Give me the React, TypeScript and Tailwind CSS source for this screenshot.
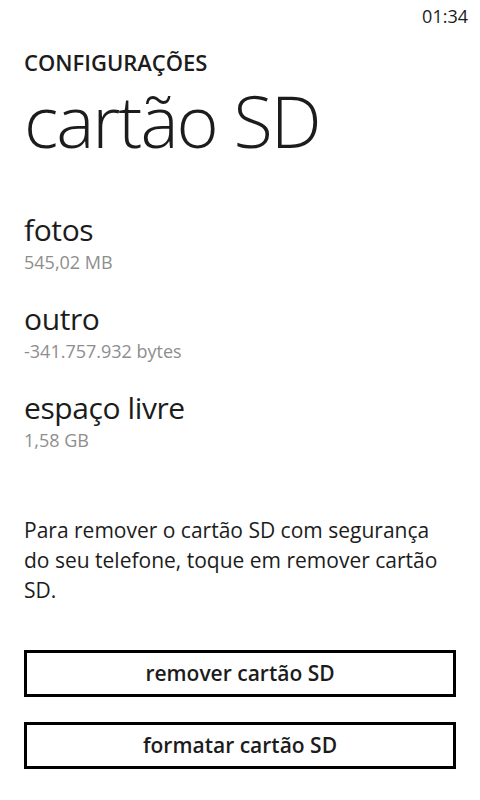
const items = [
  { title: 'fotos', detail: '545,02 MB' },
  { title: 'outro', detail: '-341.757.932 bytes' },
  { title: 'espaço livre', detail: '1,58 GB' },
];

function StorageRow({ title, detail }: { title: string; detail: string }) {
  return (
    <div className="flex flex-col">
      <span className="text-[30px] leading-[40px] font-normal tracking-[-0.4px] text-[#1c1c1c]">{title}</span>
      <span className="text-[18px] leading-[24px] text-[#8e8e8e]">{detail}</span>
    </div>
  );
}

function OutlineButton({ label }: { label: string }) {
  return (
    <button
      type="button"
      className="flex h-[47px] w-[432px] items-center justify-center border-[3px] border-black bg-white text-[21px] font-semibold text-[#1c1c1c]"
    >
      {label}
    </button>
  );
}

export default function App() {
  return (
    <div
      className="h-[800px] w-[480px] overflow-hidden bg-white text-[#1c1c1c]"
      style={{ fontFamily: '"Open Sans", "Noto Sans", sans-serif' }}
    >
      {/* status bar */}
      <div className="flex h-[32px] justify-end pr-[12px] pt-[6px]">
        <span className="text-[18px] leading-[20px]">01:34</span>
      </div>

      <div className="pl-[24px]">
        <p className="mt-[16px] text-[22px] leading-[28px] font-semibold">CONFIGURAÇÕES</p>
        <h1 className="mt-[6px] text-[72px] leading-[76px] font-light tracking-[-2px]">cartão SD</h1>

        <div className="mt-[52px] flex flex-col gap-[25px]">
          {items.map((it) => (
            <StorageRow key={it.title} {...it} />
          ))}
        </div>

        <p className="mt-[63px] w-[432px] text-[21px] leading-[30px]">
          Para remover o cartão SD com segurança do seu telefone, toque em remover cartão SD.
        </p>

        <div className="mt-[45px] flex flex-col gap-[25px]">
          <OutlineButton label="remover cartão SD" />
          <OutlineButton label="formatar cartão SD" />
        </div>
      </div>
    </div>
  );
}
